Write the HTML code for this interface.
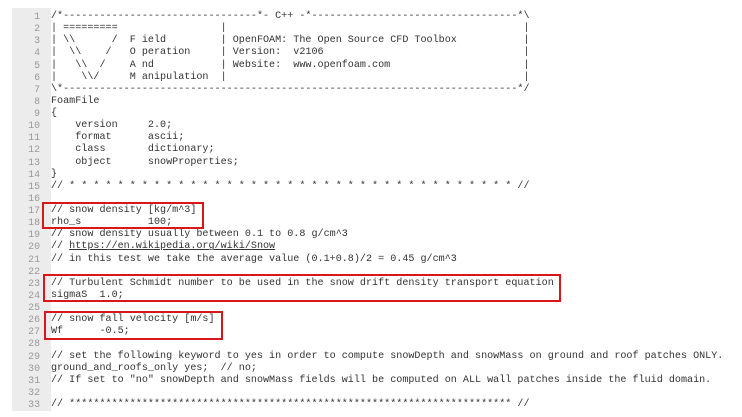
<!DOCTYPE html>
<html><head><meta charset="utf-8"><style>
html,body{margin:0;padding:0;background:#fff;width:742px;height:417px;overflow:hidden;position:relative}
.g{position:absolute;left:12px;top:8px;width:39px;height:403px;background:#ececec}
pre{margin:0;position:absolute;top:11px;font-family:"Liberation Mono",monospace;font-size:10.1px;line-height:12.125px;color:#333}
.n{left:10px;width:30px;text-align:right;color:#999;font-size:9.9px}
.c{left:51px}
.b{position:absolute;border:2px solid #d9161c;box-sizing:border-box}
u{text-decoration:underline}
</style></head><body>
<div class="g"></div>
<pre class="n">1
2
3
4
5
6
7
8
9
10
11
12
13
14
15
16
17
18
19
20
21
22
23
24
25
26
27
28
29
30
31
32
33</pre>
<pre class="c">/*--------------------------------*- C++ -*----------------------------------*\
| =========                 |                                                 |
| \\      /  F ield         | OpenFOAM: The Open Source CFD Toolbox           |
|  \\    /   O peration     | Version:  v2106                                 |
|   \\  /    A nd           | Website:  www.openfoam.com                      |
|    \\/     M anipulation  |                                                 |
\*---------------------------------------------------------------------------*/
FoamFile
{
    version     2.0;
    format      ascii;
    class       dictionary;
    object      snowProperties;
}
// * * * * * * * * * * * * * * * * * * * * * * * * * * * * * * * * * * * * * //

// snow density [kg/m^3]
rho_s           100;
// snow density usually between 0.1 to 0.8 g/cm^3
// <u>https://en.wikipedia.org/wiki/Snow</u>
// in this test we take the average value (0.1+0.8)/2 = 0.45 g/cm^3

// Turbulent Schmidt number to be used in the snow drift density transport equation
sigmaS  1.0;

// snow fall velocity [m/s]
Wf      -0.5;

// set the following keyword to yes in order to compute snowDepth and snowMass on ground and roof patches ONLY.
ground_and_roofs_only yes;  // no;
// If set to "no" snowDepth and snowMass fields will be computed on ALL wall patches inside the fluid domain.

// ************************************************************************* //</pre>
<div class="b" style="left:42px;top:202px;width:162px;height:27px"></div>
<div class="b" style="left:43px;top:274px;width:518px;height:28px"></div>
<div class="b" style="left:44px;top:311px;width:179px;height:29px"></div>
</body></html>
